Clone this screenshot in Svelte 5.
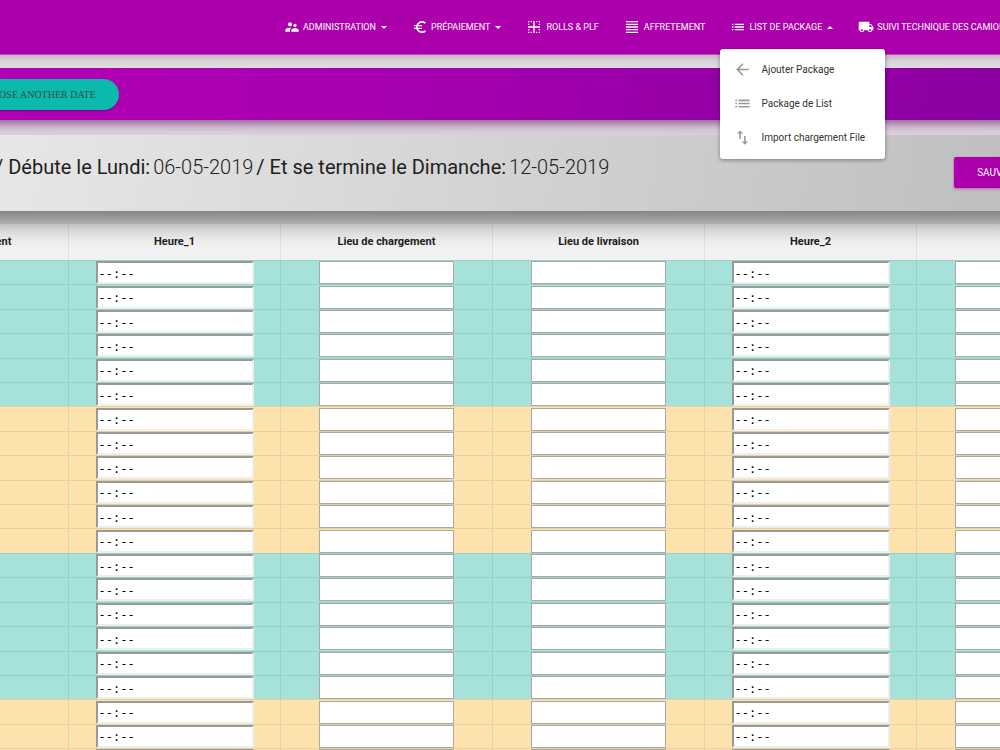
<script lang="ts">
  type MenuItem = { label: string; icon: string };
  type NavItem = { label: string; icon: string; caret?: boolean; menu?: MenuItem[] };

  const icons: Record<string, string> = {
    people:
      "M16.5 12c1.38 0 2.49-1.12 2.49-2.5S17.88 7 16.5 7C15.12 7 14 8.12 14 9.5s1.12 2.5 2.5 2.5zM9 11c1.66 0 2.99-1.34 2.99-3S10.66 5 9 5C7.34 5 6 6.34 6 8s1.34 3 3 3zm7.5 3c-1.83 0-5.5.92-5.5 2.75V19h11v-2.25c0-1.83-3.67-2.75-5.5-2.75zM9 13c-2.33 0-7 1.17-7 3.5V19h7v-2.25c0-.85.33-2.34 2.37-3.47C10.5 13.1 9.66 13 9 13z",
    euro:
      "M15 18.5c-2.51 0-4.68-1.42-5.76-3.5H15v-2H8.58c-.05-.33-.08-.66-.08-1s.03-.67.08-1H15V9H9.24C10.32 6.92 12.5 5.5 15 5.5c1.61 0 3.09.59 4.23 1.57L21 5.3C19.41 3.87 17.3 3 15 3c-3.92 0-7.24 2.51-8.48 6H3v2h3.06c-.04.33-.06.66-.06 1s.02.67.06 1H3v2h3.52c1.24 3.49 4.56 6 8.48 6 2.31 0 4.41-.87 6-2.3l-1.78-1.77c-1.13.98-2.6 1.57-4.22 1.57z",
    grid:
      "M3 21h2v-2H3v2zM5 7H3v2h2V7zM3 17h2v-2H3v2zM7 21h2v-2H7v2zM5 3H3v2h2V3zM9 3H7v2h2V3zM17 3h-2v2h2V3zM19 9h2V7h-2v2zM19 3v2h2V3h-2zM13 3h-2v8H3v2h8v8h2v-8h8v-2h-8V3zM19 17h2v-2h-2v2zM15 21h2v-2h-2v2zM19 21h2v-2h-2v2z",
    lines: "M3 21h18v-2H3v2zM3 17h18v-2H3v2zM3 13h18v-2H3v2zM3 9h18V7H3v2zM3 3v2h18V3H3z",
    list: "M3 13h2v-2H3v2zM3 17h2v-2H3v2zM3 9h2V7H3v2zM7 13h14v-2H7v2zM7 17h14v-2H7v2zM7 7v2h14V7H7z",
    truck:
      "M20 8h-3V4H3c-1.1 0-2 .9-2 2v11h2c0 1.66 1.34 3 3 3s3-1.34 3-3h6c0 1.66 1.34 3 3 3s3-1.34 3-3h2v-5l-3-4zM6 18.5c-.83 0-1.5-.67-1.5-1.5s.67-1.5 1.5-1.5 1.5.67 1.5 1.5-.67 1.5-1.5 1.5zm13.5-9l1.96 2.5H17V9.5h2.5zM18 18.5c-.83 0-1.5-.67-1.5-1.5s.67-1.5 1.5-1.5 1.5.67 1.5 1.5-.67 1.5-1.5 1.5z",
    back: "M20 11H7.83l5.59-5.59L12 4l-8 8 8 8 1.41-1.41L7.83 13H20v-2z",
    swap: "M16 17.01V10h-2v7.01h-3L15 21l4-3.99h-3zM9 3L5 6.99h3V14h2V6.99h3L9 3z",
  };

  const nav: NavItem[] = [
    { label: "Administration", icon: "people", caret: true },
    { label: "Prépaiement", icon: "euro", caret: true },
    { label: "Rolls & PLF", icon: "grid" },
    { label: "Affretement", icon: "lines" },
    {
      label: "List de package",
      icon: "list",
      caret: true,
      menu: [
        { label: "Ajouter Package", icon: "back" },
        { label: "Package de List", icon: "list" },
        { label: "Import chargement File", icon: "swap" },
      ],
    },
    { label: "Suivi technique des camions", icon: "truck", caret: true },
  ];

  const columns = [
    { label: "Lieu de chargement", field: "" },
    { label: "Heure_1", field: "time" },
    { label: "Lieu de chargement", field: "place" },
    { label: "Lieu de livraison", field: "place" },
    { label: "Heure_2", field: "time" },
    { label: "", field: "place" },
  ];

  const rowsPerDay = 6;
  const rows = Array.from({ length: 24 }, (_, i) => i);

  let menuOpen = $state(true);
</script>

{#snippet icon(name: string)}
  <svg class="icon" viewBox="0 0 24 24" aria-hidden="true"><path d={icons[name]} /></svg>
{/snippet}

<div class="page">
  <nav class="navbar">
    {#each nav as item}
      <div class="nav-item">
        {#if item.caret}
          <button class="nav-link" onclick={() => item.menu && (menuOpen = !menuOpen)}>
            {@render icon(item.icon)}
            <span>{item.label}</span>
            <i class="caret" class:up={item.menu && menuOpen}></i>
          </button>
        {:else}
          <a class="nav-link plain" href="#top">
            {@render icon(item.icon)}
            <span>{item.label}</span>
          </a>
        {/if}
        {#if item.menu && menuOpen}
          <div class="dropdown">
            {#each item.menu as entry}
              <a href="#top">
                {@render icon(entry.icon)}
                {entry.label}
              </a>
            {/each}
          </div>
        {/if}
      </div>
    {/each}
  </nav>

  <section class="toolbar">
    <button class="date-button">Choose another date</button>
  </section>

  <header class="week">
    <h1>
      <span>/ Débute le Lundi:</span>
      <small>06-05-2019</small>
      <span>/ Et se termine le Dimanche:</span>
      <small>12-05-2019</small>
    </h1>
    <button class="save">Sauvegarder</button>
  </header>

  <table>
    <thead>
      <tr>
        {#each columns as col}
          <th scope="col">{col.label}</th>
        {/each}
      </tr>
    </thead>
    <tbody>
      {#each rows as row}
        <tr class:alt={Math.floor(row / rowsPerDay) % 2 === 1}>
          {#each columns as col}
            <td>
              {#if col.field === "time"}
                <input class="time" type="text" value="--:--" aria-label={col.label} />
              {:else if col.field === "place"}
                <input class="place" type="text" aria-label={col.label || "Lieu"} />
              {/if}
            </td>
          {/each}
        </tr>
      {/each}
    </tbody>
  </table>
</div>

<style>
  :global(body) {
    margin: 0;
    background: #ddd;
  }
  .page {
    height: 100vh;
    overflow: hidden;
    font-family: Roboto, "Liberation Sans", sans-serif;
    color: #212121;
  }
  button {
    border: 0;
    font-family: inherit;
    cursor: pointer;
  }
  a {
    text-decoration: none;
  }
  .icon {
    flex: none;
    width: 16px;
    height: 16px;
    fill: currentColor;
  }

  .navbar {
    position: relative;
    z-index: 3;
    display: flex;
    align-items: center;
    gap: 25px;
    height: 54px;
    margin: 0 -30px;
    padding: 0 30px 0 314px;
    background: #ad00ad;
    border-bottom: 1px solid #b84fb8;
    box-shadow: 0 1px 10px rgb(130 20 130 / 0.35);
  }
  .nav-item {
    position: relative;
    flex: none;
  }
  .nav-link {
    display: flex;
    align-items: center;
    gap: 3px;
    padding: 0;
    background: none;
    color: #fff;
    font-size: 9px;
    line-height: 16px;
    text-transform: uppercase;
    white-space: nowrap;
  }
  .nav-link.plain {
    gap: 4px;
  }
  .caret {
    margin-left: 2px;
    border: 3px solid transparent;
    border-top-color: #fff;
    border-bottom: 0;
  }
  .caret.up {
    border-top: 0;
    border-bottom: 3px solid #fff;
  }
  .dropdown {
    position: absolute;
    top: 30px;
    left: -10px;
    padding: 3px 0 5px;
    border-radius: 3px;
    background: #fff;
    box-shadow: 0 1px 4px rgb(0 0 0 / 0.4);
  }
  .dropdown a {
    display: flex;
    align-items: center;
    gap: 9px;
    height: 34px;
    padding: 0 20px 0 13px;
    color: #333;
    font-size: 10px;
    white-space: nowrap;
  }
  .dropdown .icon {
    width: 19px;
    height: 19px;
    color: #999;
  }

  .toolbar {
    display: flex;
    align-items: center;
    height: 52px;
    margin: 13px -30px 0;
    padding: 0 30px;
    background: linear-gradient(100deg, #b300b5, #a700af 40%, #9400a6 72%, #8c00a2);
    box-shadow:
      0 9px 16px rgb(173 0 173 / 0.25),
      0 3px 7px rgb(0 0 0 / 0.4);
    clip-path: inset(0 0 -30px);
  }
  .date-button {
    height: 31px;
    margin-left: -45px;
    padding: 0 23px;
    border-radius: 16px;
    background: #0cb9ad;
    color: #30504d;
    font-family: "Roboto Slab", "Liberation Serif", serif;
    font-size: 10px;
    text-transform: uppercase;
    box-shadow: 0 1px 2px rgb(0 0 0 / 0.3);
  }

  .week {
    position: relative;
    z-index: 1;
    display: flex;
    justify-content: space-between;
    height: 76px;
    margin: 15px -30px 0;
    padding: 0 30px;
    background: linear-gradient(100deg, #e8e8e8, #bebebe);
    box-shadow: 0 10px 26px rgb(0 0 0 / 0.5);
    clip-path: inset(0 0 -40px);
  }
  h1 {
    display: flex;
    gap: 3px;
    margin: 20px 0 0 -5px;
    font-size: 20px;
    font-weight: 400;
    line-height: 24px;
    white-space: nowrap;
  }
  small {
    font-size: inherit;
    font-weight: 300;
  }
  .save {
    flex: none;
    height: 31px;
    margin: 22px -69px 0 0;
    padding: 0 23px;
    border-radius: 2px;
    background: #ad00ad;
    color: #fff;
    font-size: 10px;
    text-transform: uppercase;
    box-shadow: 0 1px 3px rgb(173 0 173 / 0.5);
  }

  table {
    width: 1272px;
    margin: 12px 0 0 -143px;
    border-spacing: 0;
    table-layout: fixed;
    background: #f2f2f2;
  }
  tbody {
    height: 586px;
  }
  th,
  td {
    box-sizing: border-box;
    padding: 0;
    border: solid rgb(0 0 0 / 0.08);
    border-width: 1px 1px 0 0;
    text-align: center;
  }
  th {
    height: 37px;
    padding-bottom: 2px;
    font-size: 11px;
    font-weight: 700;
  }
  td {
    background: #a6e1da;
    line-height: 0;
  }
  .alt td {
    background: #fee2ad;
  }
  input {
    box-sizing: border-box;
    height: 23px;
    background: #fff;
    color: #000;
  }
  .time {
    width: 158px;
    padding: 2px 1px 0;
    border: 2px solid;
    border-color: #999 #eee #eee #999;
    font: 12px "DejaVu Sans Mono", monospace;
  }
  .place {
    width: 135px;
    padding: 0 2px;
    border: 1px solid #a9a9a9;
    font: 11px Roboto, sans-serif;
  }
</style>
